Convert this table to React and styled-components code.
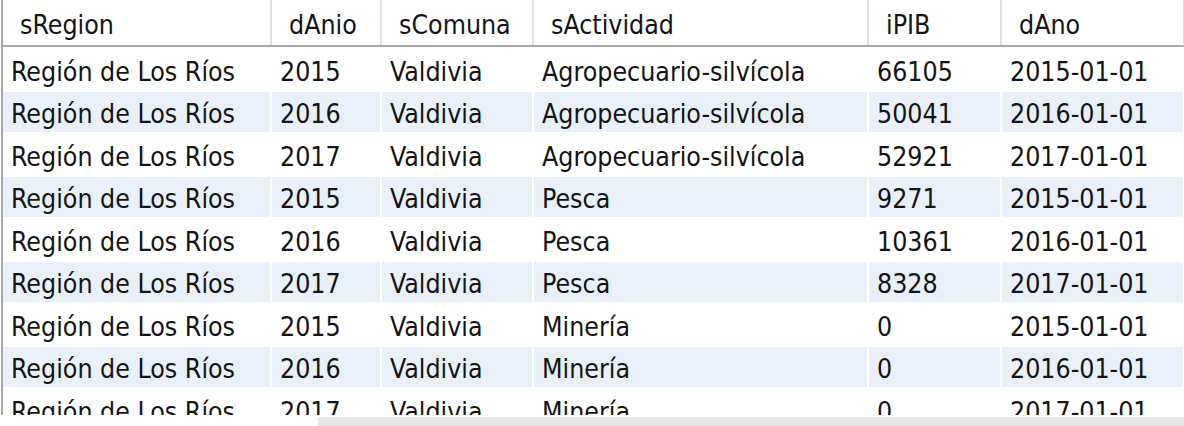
import React from "react";
import styled, { createGlobalStyle } from "styled-components";

const GlobalStyle = createGlobalStyle`
  html, body {
    margin: 0;
    padding: 0;
    background: #ffffff;
    overflow: hidden;
  }
`;

const columns = [
  { key: "sRegion", width: 267 },
  { key: "dAnio", width: 108 },
  { key: "sComuna", width: 150 },
  { key: "sActividad", width: 333 },
  { key: "iPIB", width: 131 },
  { key: "dAno", width: 181 },
];

const rows = [
  ["Región de Los Ríos", "2015", "Valdivia", "Agropecuario-silvícola", "66105", "2015-01-01"],
  ["Región de Los Ríos", "2016", "Valdivia", "Agropecuario-silvícola", "50041", "2016-01-01"],
  ["Región de Los Ríos", "2017", "Valdivia", "Agropecuario-silvícola", "52921", "2017-01-01"],
  ["Región de Los Ríos", "2015", "Valdivia", "Pesca", "9271", "2015-01-01"],
  ["Región de Los Ríos", "2016", "Valdivia", "Pesca", "10361", "2016-01-01"],
  ["Región de Los Ríos", "2017", "Valdivia", "Pesca", "8328", "2017-01-01"],
  ["Región de Los Ríos", "2015", "Valdivia", "Minería", "0", "2015-01-01"],
  ["Región de Los Ríos", "2016", "Valdivia", "Minería", "0", "2016-01-01"],
  ["Región de Los Ríos", "2017", "Valdivia", "Minería", "0", "2017-01-01"],
];

const template = columns.map((c) => `${c.width}px`).join(" ");

const Page = styled.div`
  width: 1184px;
  height: 426px;
  display: flex;
  flex-direction: column;
  font-family: Tahoma, "DejaVu Sans Condensed", "DejaVu Sans", sans-serif;
  font-size: 26.5px;
  color: #141414;
`;

const Viewport = styled.div`
  height: 415px;
  margin-left: 1px;
  border-left: 2px solid #a9a9a9;
  overflow: hidden;
`;

const HeaderRow = styled.div`
  display: grid;
  grid-template-columns: ${template};
  column-gap: 2px;
  height: 45px;
  width: 1180px;
  background: #e2e2e2;
  border-bottom: 2px solid #a9a9a9;
  border-right: 2px solid #dcdcdc;
`;

const HeaderCell = styled.div`
  background: #ffffff;
  display: flex;
  align-items: center;
  padding-left: 17px;
  padding-top: 4px;
  white-space: nowrap;
  overflow: hidden;
`;

const Body = styled.div`
  display: grid;
  grid-template-columns: ${template};
  grid-auto-rows: 40.5px;
  gap: 2px;
  padding-top: 2px;
`;

const Cell = styled.div`
  background: ${(p) => (p.$striped ? "#e9f0fa" : "#ffffff")};
  display: flex;
  align-items: center;
  padding-left: 8px;
  padding-top: 4px;
  white-space: nowrap;
  overflow: hidden;
`;

const Footer = styled.div`
  flex: 1;
  display: flex;
  align-items: flex-end;
  padding-left: 318px;
`;

const ScrollThumb = styled.div`
  flex: 1;
  height: 9px;
  background: #e6e6e6;
`;

export default function App() {
  return (
    <Page>
      <GlobalStyle />
      <Viewport>
        <HeaderRow>
          {columns.map((c) => (
            <HeaderCell key={c.key}>{c.key}</HeaderCell>
          ))}
        </HeaderRow>
        <Body>
          {rows.map((row, r) =>
            row.map((value, i) => (
              <Cell key={`${r}-${i}`} $striped={r % 2 === 1}>
                {value}
              </Cell>
            ))
          )}
        </Body>
      </Viewport>
      <Footer>
        <ScrollThumb />
      </Footer>
    </Page>
  );
}
